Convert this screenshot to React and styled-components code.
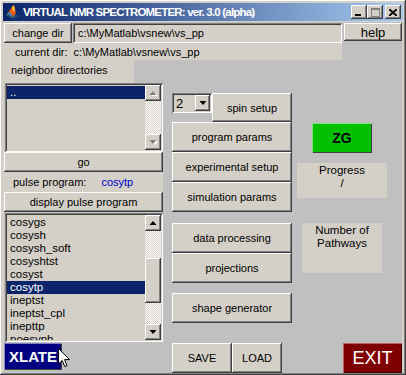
import React from 'react';
import styled, { createGlobalStyle } from 'styled-components';

const FACE = '#d4d0c8';
const BG = '#c0c0c0';

const GlobalStyle = createGlobalStyle`
    html, body {
        margin: 0;
        padding: 0;
        overflow: hidden;
        background: ${BG};
    }
    * { box-sizing: border-box; }
`;

const neighbors = ['..'];
const programs = [
    'cosygs', 'cosysh', 'cosysh_soft', 'cosyshtst', 'cosyst',
    'cosytp', 'ineptst', 'ineptst_cpl', 'inepttp', 'noesyph',
];

// small black (or greyed) triangle used on scroll and popup arrows
const Arrow = ({ down, disabled }) => (
    <svg width="8" height="5" viewBox="0 0 8 5">
        {disabled && (
            <polygon points={down ? '2,1 9,1 5.5,5' : '2,5 9,5 5.5,1'} fill="#fff" />
        )}
        <polygon
            points={down ? '0.5,0 7.5,0 4,4' : '0.5,4 7.5,4 4,0'}
            fill={disabled ? '#808080' : '#000'}
        />
    </svg>
);

const App = () => {
    return (
        <Window>
            <GlobalStyle />
            <TitleBar>
                <AppIcon viewBox="0 0 16 16">
                    <polygon points="1,11 6,8 15,12 9,15" fill="#1b4f72" />
                    <polygon points="3,10 8,3 10,1 12,9 9,13" fill="#e05a1a" />
                    <polygon points="8,3 10,1 11,6 9,8" fill="#f9c12e" />
                    <polygon points="3,10 6,8 9,13" fill="#2a86c8" />
                </AppIcon>
                <Title>VIRTUAL NMR SPECTROMETER: ver. 3.0 (alpha)</Title>
                <CaptionButtons>
                    <CapBtn>
                        <svg width="8" height="7" viewBox="0 0 8 7"><rect x="0" y="5" width="6" height="2" fill="#000" /></svg>
                    </CapBtn>
                    <CapBtn>
                        <svg width="9" height="9" viewBox="0 0 9 9"><rect x="0.5" y="0.5" width="8" height="8" fill="none" stroke="#808080" /><rect x="0" y="0" width="9" height="2" fill="#808080" /></svg>
                    </CapBtn>
                    <CapBtn $gap>
                        <svg width="8" height="7" viewBox="0 0 8 7"><path d="M0 0 L8 7 M8 0 L0 7" stroke="#000" strokeWidth="1.8" /></svg>
                    </CapBtn>
                </CaptionButtons>
            </TitleBar>
            <Client>
                <TopRow>
                    <PushButton $w={68} $h={20}>change dir</PushButton>
                    <EditField>c:\MyMatlab\vsnew\vs_pp</EditField>
                    <PushButton $w={58} $h={18} $size={13}>help</PushButton>
                </TopRow>
                <InfoRow $w={338} $h={17}>
                    <Label $left={11}>current dir:</Label>
                    <Label $left={6}>c:\MyMatlab\vsnew\vs_pp</Label>
                </InfoRow>
                <Body>
                    <LeftCol>
                        <InfoRow $w={130} $h={23} $top>
                            <Label $left={7}>neighbor directories</Label>
                        </InfoRow>
                        <ListBox $h={69}>
                            <ListItems>
                                {neighbors.map((n) => (
                                    <Item key={n} $selected>{n}</Item>
                                ))}
                            </ListItems>
                            <ScrollBar>
                                <ScrollArrow><Arrow disabled /></ScrollArrow>
                                <Track />
                                <ScrollArrow><Arrow down disabled /></ScrollArrow>
                            </ScrollBar>
                        </ListBox>
                        <PushButton $w={159} $h={20}>go</PushButton>
                        <InfoRow $w={159} $h={20}>
                            <Label $left={9}>pulse program:</Label>
                            <Label $left={15} $color="#0000cc">cosytp</Label>
                        </InfoRow>
                        <PushButton $w={159} $h={20}>display pulse program</PushButton>
                        <ListBox $h={129} $gap={1}>
                            <ListItems>
                                {programs.map((p) => (
                                    <Item key={p} $selected={p === 'cosytp'}>{p}</Item>
                                ))}
                            </ListItems>
                            <ScrollBar>
                                <ScrollArrow><Arrow /></ScrollArrow>
                                <Track>
                                    <Thumb $offset={27} $h={45} />
                                </Track>
                                <ScrollArrow><Arrow down /></ScrollArrow>
                            </ScrollBar>
                        </ListBox>
                        <XlateWrap>
                            <ColorButton $bg="#000080" $w={58} $h={27} $size={15} $bold>XLATE</ColorButton>
                            <Cursor viewBox="0 0 12 20" width="12" height="20">
                                <path d="M0.5 0.5 L0.5 16 L4.2 12.4 L6.8 18.6 L9 17.6 L6.5 11.6 L11.5 11.6 Z" fill="#fff" stroke="#000" strokeWidth="1" />
                            </Cursor>
                        </XlateWrap>
                    </LeftCol>
                    <MidCol>
                        <SpinRow>
                            <Popup>
                                <PopupValue>2</PopupValue>
                                <PopupArrow><Arrow down /></PopupArrow>
                            </Popup>
                            <PushButton $w={80} $h={29}>spin setup</PushButton>
                        </SpinRow>
                        <PushButton $w={120} $h={30}>program params</PushButton>
                        <PushButton $w={120} $h={30}>experimental setup</PushButton>
                        <PushButton $w={120} $h={30}>simulation params</PushButton>
                        <Spacer $h={11} />
                        <PushButton $w={120} $h={30}>data processing</PushButton>
                        <PushButton $w={120} $h={30}>projections</PushButton>
                        <Spacer $h={10} />
                        <PushButton $w={120} $h={30}>shape generator</PushButton>
                        <Spacer $h={20} />
                        <ButtonRow>
                            <PushButton $w={60} $h={30}>SAVE</PushButton>
                            <PushButton $w={50} $h={30}>LOAD</PushButton>
                        </ButtonRow>
                    </MidCol>
                    <RightCol>
                        <ColorButton $bg="#00c000" $color="#000" $w={60} $h={30} $size={14} $bold $left={20}>ZG</ColorButton>
                        <InfoBox $w={90} $h={35} $left={5} $top={10}>
                            <span>Progress</span>
                            <span>/</span>
                        </InfoBox>
                        <InfoBox $w={80} $h={50} $left={10} $top={25}>
                            <span>Number of</span>
                            <span>Pathways</span>
                        </InfoBox>
                        <ColorButton $bg="#800000" $w={59} $h={30} $size={18} $left={51} $top={70} $exit>EXIT</ColorButton>
                    </RightCol>
                </Body>
            </Client>
        </Window>
    );
};

export default App;

const raised = `
    box-shadow: inset -1px -1px #404040, inset 1px 1px #ffffff,
        inset -2px -2px #808080, inset 2px 2px ${FACE};
`;

const sunken = `
    box-shadow: inset 1px 1px #808080, inset -1px -1px #ffffff,
        inset 2px 2px #404040, inset -2px -2px ${FACE};
`;

const Window = styled.div`
    width: 406px;
    height: 375px;
    padding: 3px 3px 2px 3px;
    background: ${FACE};
    box-shadow: inset -1px -1px #404040, inset 1px 1px #ffffff,
        inset -2px -2px #808080;
    display: flex;
    flex-direction: column;
    font-family: "Liberation Sans", Arial, sans-serif;
    font-size: 11px;
    color: #000;
`;

const TitleBar = styled.div`
    height: 18px;
    display: flex;
    align-items: center;
    padding-left: 1px;
    background: linear-gradient(to right, #0a246a, #a6caf0);
`;

const AppIcon = styled.svg`
    width: 16px;
    height: 16px;
    flex-shrink: 0;
`;

const Title = styled.div`
    margin-left: 3px;
    color: #fff;
    font-weight: bold;
    font-size: 11.5px;
    letter-spacing: -0.8px;
    white-space: nowrap;
    flex: 1;
`;

const CaptionButtons = styled.div`
    display: flex;
    margin-right: 2px;
`;

const CapBtn = styled.div`
    width: 16px;
    height: 14px;
    margin-left: ${(p) => (p.$gap ? '2px' : '0')};
    background: ${FACE};
    ${raised}
    display: flex;
    align-items: center;
    justify-content: center;
`;

const Client = styled.div`
    flex: 1;
    margin: 1px 1px 0 1px;
    padding-top: 1px;
    background: ${BG};
    display: flex;
    flex-direction: column;
`;

const TopRow = styled.div`
    display: flex;
    height: 20px;
    align-items: flex-start;
`;

const PushButton = styled.div`
    width: ${(p) => p.$w}px;
    height: ${(p) => p.$h}px;
    flex-shrink: 0;
    background: ${FACE};
    ${raised}
    display: flex;
    align-items: center;
    justify-content: center;
    font-size: ${(p) => p.$size || 11}px;
    white-space: nowrap;
`;

const EditField = styled.div`
    width: 269px;
    height: 20px;
    margin: 0 2px 0 1px;
    background: ${FACE};
    box-shadow: inset 1px 1px #808080, inset -1px -1px #ffffff,
        inset 2px 2px #404040;
    display: flex;
    align-items: center;
    padding-left: 5px;
    font-size: 11px;
`;

const InfoRow = styled.div`
    width: ${(p) => p.$w}px;
    height: ${(p) => p.$h}px;
    flex-shrink: 0;
    background: ${FACE};
    display: flex;
    align-items: ${(p) => (p.$top ? 'flex-start' : 'center')};
    padding-top: ${(p) => (p.$top ? '4px' : '0')};
    font-size: 11px;
`;

const Label = styled.span`
    margin-left: ${(p) => p.$left}px;
    color: ${(p) => p.$color || '#000'};
    white-space: nowrap;
`;

const Body = styled.div`
    flex: 1;
    display: flex;
`;

const LeftCol = styled.div`
    width: 159px;
    display: flex;
    flex-direction: column;
`;

const ListBox = styled.div`
    width: 158px;
    height: ${(p) => p.$h}px;
    margin: ${(p) => p.$gap || 0}px 0 0 1px;
    padding: 2px;
    background: ${FACE};
    ${sunken}
    display: flex;
    overflow: hidden;
`;

const ListItems = styled.div`
    flex: 1;
    padding-top: 1px;
    overflow: hidden;
`;

const Item = styled.div`
    height: 13px;
    line-height: 13px;
    padding-left: 3px;
    font-size: 11.5px;
    white-space: nowrap;
    background: ${(p) => (p.$selected ? '#0a246a' : 'transparent')};
    color: ${(p) => (p.$selected ? '#fff' : '#000')};
`;

const ScrollBar = styled.div`
    width: 16px;
    display: flex;
    flex-direction: column;
`;

const ScrollArrow = styled.div`
    width: 16px;
    height: 16px;
    flex-shrink: 0;
    background: ${FACE};
    ${raised}
    display: flex;
    align-items: center;
    justify-content: center;
`;

const Track = styled.div`
    flex: 1;
    background-color: ${FACE};
    background-image: conic-gradient(#ffffff 25%, ${FACE} 0 50%, #ffffff 0 75%, ${FACE} 0);
    background-size: 2px 2px;
`;

const Thumb = styled.div`
    margin-top: ${(p) => p.$offset}px;
    height: ${(p) => p.$h}px;
    background: ${FACE};
    ${raised}
`;

const XlateWrap = styled.div`
    position: relative;
    margin-top: 1px;
`;

const ColorButton = styled.div`
    width: ${(p) => p.$w}px;
    height: ${(p) => p.$h}px;
    margin-left: ${(p) => p.$left || 0}px;
    margin-top: ${(p) => p.$top || 0}px;
    background: ${(p) => p.$bg};
    color: ${(p) => p.$color || '#fff'};
    font-size: ${(p) => p.$size}px;
    font-weight: ${(p) => (p.$bold ? 'bold' : 'normal')};
    display: flex;
    align-items: center;
    justify-content: center;
    box-shadow: ${(p) => (p.$exit
        ? 'inset 1px 1px #c06060, inset -1px -1px #400000'
        : 'inset 1px 1px rgba(255,255,255,0.5), inset -1px -1px #404040')};
`;

const Cursor = styled.svg`
    position: absolute;
    left: 54px;
    top: 5px;
`;

const MidCol = styled.div`
    width: 120px;
    margin-left: 9px;
    padding-top: 33px;
    display: flex;
    flex-direction: column;
`;

const SpinRow = styled.div`
    display: flex;
    align-items: flex-start;
`;

const Popup = styled.div`
    width: 40px;
    height: 20px;
    padding: 2px;
    background: ${FACE};
    ${sunken}
    display: flex;
    align-items: center;
`;

const PopupValue = styled.span`
    flex: 1;
    padding-left: 2px;
    font-size: 13px;
`;

const PopupArrow = styled.div`
    width: 15px;
    height: 16px;
    background: ${FACE};
    ${raised}
    display: flex;
    align-items: center;
    justify-content: center;
`;

const Spacer = styled.div`
    height: ${(p) => p.$h}px;
    flex-shrink: 0;
`;

const ButtonRow = styled.div`
    display: flex;
`;

const RightCol = styled.div`
    flex: 1;
    padding-top: 63px;
    display: flex;
    flex-direction: column;
`;

const InfoBox = styled.div`
    width: ${(p) => p.$w}px;
    height: ${(p) => p.$h}px;
    margin-left: ${(p) => p.$left}px;
    margin-top: ${(p) => p.$top}px;
    background: ${FACE};
    display: flex;
    flex-direction: column;
    align-items: center;
    padding-top: 1px;
    font-size: 11.5px;
    line-height: 13px;
`;
